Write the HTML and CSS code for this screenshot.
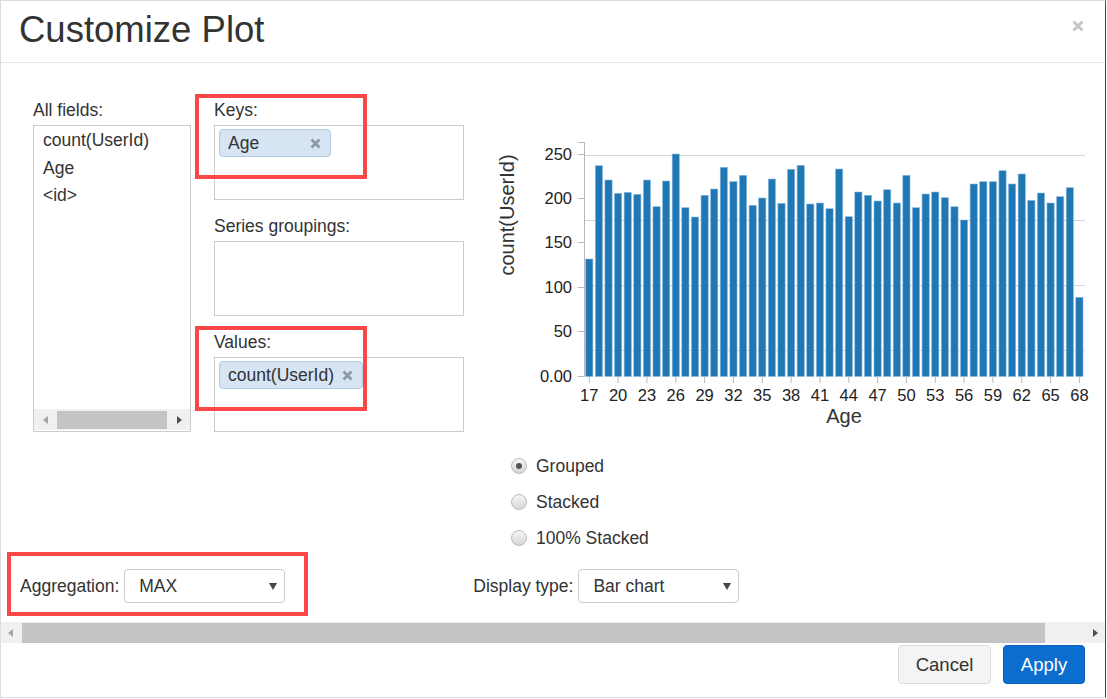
FILE: index.html
```html
<!DOCTYPE html>
<html>
<head>
<meta charset="utf-8">
<title>Customize Plot</title>
<link rel="stylesheet" href="styles.css">
</head>
<body>
<div class="modal">
  <div class="header">
    <h1 class="title">Customize Plot</h1>
    <svg class="close" width="12" height="12" viewBox="0 0 12 12"><path d="M1.5 1.5L10.5 10.5M10.5 1.5L1.5 10.5" stroke="#c6c6c6" stroke-width="3"/></svg>
  </div>

  <div class="body">
    <div class="top-row">
      <div class="fields-col">
        <div class="label">All fields:</div>
        <div class="listbox">
          <div class="list-items">
            <div class="list-item">count(UserId)</div>
            <div class="list-item">Age</div>
            <div class="list-item">&lt;id&gt;</div>
          </div>
          <div class="mini-scroll">
            <span class="arrow-left light"></span>
            <span class="mini-thumb"></span>
            <span class="arrow-right"></span>
          </div>
        </div>
      </div>

      <div class="drop-col">
        <div class="label">Keys:</div>
        <div class="dropbox">
          <span class="chip"><span>Age</span><svg class="chip-x" width="11" height="11" viewBox="0 0 11 11"><path d="M1.5 1.5L9.5 9.5M9.5 1.5L1.5 9.5" stroke="#8d99a6" stroke-width="2.8"/></svg></span>
        </div>
        <div class="label">Series groupings:</div>
        <div class="dropbox"></div>
        <div class="label">Values:</div>
        <div class="dropbox last">
          <span class="chip"><span>count(UserId)</span><svg class="chip-x" width="11" height="11" viewBox="0 0 11 11"><path d="M1.5 1.5L9.5 9.5M9.5 1.5L1.5 9.5" stroke="#8d99a6" stroke-width="2.8"/></svg></span>
        </div>
      </div>

      <div class="chart-col">
        <svg class="chart" width="610" height="300" viewBox="0 0 610 300">
          <g stroke="#d6d6d6" stroke-width="1">
            <line x1="95" y1="25.5" x2="595" y2="25.5"/>
            <line x1="95" y1="90.5" x2="595" y2="90.5"/>
            <line x1="95" y1="155.5" x2="595" y2="155.5"/>
            <line x1="95" y1="220.5" x2="595" y2="220.5"/>
          </g>
          <g fill="#1f77b4" stroke="#8dbbe0" stroke-width="0.6">
            <rect x="95.70" y="129" width="7.2" height="117.5"/>
            <rect x="105.31" y="35.7" width="7.2" height="210.8"/>
            <rect x="114.92" y="50" width="7.2" height="196.5"/>
            <rect x="124.53" y="63.3" width="7.2" height="183.2"/>
            <rect x="134.14" y="62.3" width="7.2" height="184.2"/>
            <rect x="143.75" y="64.3" width="7.2" height="182.2"/>
            <rect x="153.36" y="50" width="7.2" height="196.5"/>
            <rect x="162.97" y="76.7" width="7.2" height="169.8"/>
            <rect x="172.58" y="51" width="7.2" height="195.5"/>
            <rect x="182.19" y="24" width="7.2" height="222.5"/>
            <rect x="191.80" y="77.7" width="7.2" height="168.8"/>
            <rect x="201.41" y="87" width="7.2" height="159.5"/>
            <rect x="211.02" y="65.3" width="7.2" height="181.2"/>
            <rect x="220.63" y="59" width="7.2" height="187.5"/>
            <rect x="230.24" y="37.3" width="7.2" height="209.2"/>
            <rect x="239.85" y="51.7" width="7.2" height="194.8"/>
            <rect x="249.46" y="45.3" width="7.2" height="201.2"/>
            <rect x="259.07" y="75.3" width="7.2" height="171.2"/>
            <rect x="268.68" y="68" width="7.2" height="178.5"/>
            <rect x="278.29" y="49" width="7.2" height="197.5"/>
            <rect x="287.90" y="73.3" width="7.2" height="173.2"/>
            <rect x="297.51" y="39.3" width="7.2" height="207.2"/>
            <rect x="307.12" y="35.3" width="7.2" height="211.2"/>
            <rect x="316.73" y="74" width="7.2" height="172.5"/>
            <rect x="326.34" y="73" width="7.2" height="173.5"/>
            <rect x="335.95" y="78.7" width="7.2" height="167.8"/>
            <rect x="345.56" y="39" width="7.2" height="207.5"/>
            <rect x="355.17" y="86.7" width="7.2" height="159.8"/>
            <rect x="364.78" y="62" width="7.2" height="184.5"/>
            <rect x="374.39" y="65.3" width="7.2" height="181.2"/>
            <rect x="384.00" y="71" width="7.2" height="175.5"/>
            <rect x="393.61" y="59.7" width="7.2" height="186.8"/>
            <rect x="403.22" y="73" width="7.2" height="173.5"/>
            <rect x="412.83" y="45.3" width="7.2" height="201.2"/>
            <rect x="422.44" y="77.7" width="7.2" height="168.8"/>
            <rect x="432.05" y="64" width="7.2" height="182.5"/>
            <rect x="441.66" y="62" width="7.2" height="184.5"/>
            <rect x="451.27" y="67.7" width="7.2" height="178.8"/>
            <rect x="460.88" y="76.7" width="7.2" height="169.8"/>
            <rect x="470.49" y="90" width="7.2" height="156.5"/>
            <rect x="480.10" y="54" width="7.2" height="192.5"/>
            <rect x="489.71" y="51.7" width="7.2" height="194.8"/>
            <rect x="499.32" y="51.7" width="7.2" height="194.8"/>
            <rect x="508.93" y="40.7" width="7.2" height="205.8"/>
            <rect x="518.54" y="54" width="7.2" height="192.5"/>
            <rect x="528.15" y="44" width="7.2" height="202.5"/>
            <rect x="537.76" y="70.3" width="7.2" height="176.2"/>
            <rect x="547.37" y="63" width="7.2" height="183.5"/>
            <rect x="556.98" y="73" width="7.2" height="173.5"/>
            <rect x="566.59" y="66.7" width="7.2" height="179.8"/>
            <rect x="576.20" y="57.7" width="7.2" height="188.8"/>
            <rect x="585.81" y="167.3" width="7.2" height="79.2"/>
          </g>
          <g stroke="#b8b8b8" stroke-width="1" fill="none">
            <path d="M88 12.5H94.5V246.5H88"/>
            <line x1="88" y1="24.5" x2="94.5" y2="24.5"/>
            <line x1="88" y1="68.5" x2="94.5" y2="68.5"/>
            <line x1="88" y1="112.5" x2="94.5" y2="112.5"/>
            <line x1="88" y1="157.5" x2="94.5" y2="157.5"/>
            <line x1="88" y1="201.5" x2="94.5" y2="201.5"/>
            <line x1="99.3" y1="246.5" x2="99.3" y2="253"/>
            <line x1="128.1" y1="246.5" x2="128.1" y2="253"/>
            <line x1="157" y1="246.5" x2="157" y2="253"/>
            <line x1="185.8" y1="246.5" x2="185.8" y2="253"/>
            <line x1="214.6" y1="246.5" x2="214.6" y2="253"/>
            <line x1="243.5" y1="246.5" x2="243.5" y2="253"/>
            <line x1="272.3" y1="246.5" x2="272.3" y2="253"/>
            <line x1="301.1" y1="246.5" x2="301.1" y2="253"/>
            <line x1="329.9" y1="246.5" x2="329.9" y2="253"/>
            <line x1="358.8" y1="246.5" x2="358.8" y2="253"/>
            <line x1="387.6" y1="246.5" x2="387.6" y2="253"/>
            <line x1="416.4" y1="246.5" x2="416.4" y2="253"/>
            <line x1="445.3" y1="246.5" x2="445.3" y2="253"/>
            <line x1="474.1" y1="246.5" x2="474.1" y2="253"/>
            <line x1="502.9" y1="246.5" x2="502.9" y2="253"/>
            <line x1="531.8" y1="246.5" x2="531.8" y2="253"/>
            <line x1="560.6" y1="246.5" x2="560.6" y2="253"/>
            <line x1="589.4" y1="246.5" x2="589.4" y2="253"/>
          </g>
          <g class="tick-text" text-anchor="end">
            <text x="82" y="29.5">250</text>
            <text x="82" y="73.5">200</text>
            <text x="82" y="117.5">150</text>
            <text x="82" y="162.5">100</text>
            <text x="82" y="206.5">50</text>
            <text x="82" y="251.5">0.00</text>
          </g>
          <g class="tick-text" text-anchor="middle">
            <text x="99.3" y="271">17</text>
            <text x="128.1" y="271">20</text>
            <text x="157" y="271">23</text>
            <text x="185.8" y="271">26</text>
            <text x="214.6" y="271">29</text>
            <text x="243.5" y="271">32</text>
            <text x="272.3" y="271">35</text>
            <text x="301.1" y="271">38</text>
            <text x="329.9" y="271">41</text>
            <text x="358.8" y="271">44</text>
            <text x="387.6" y="271">47</text>
            <text x="416.4" y="271">50</text>
            <text x="445.3" y="271">53</text>
            <text x="474.1" y="271">56</text>
            <text x="502.9" y="271">59</text>
            <text x="531.8" y="271">62</text>
            <text x="560.6" y="271">65</text>
            <text x="589.4" y="271">68</text>
          </g>
          <text class="axis-title" x="354" y="293" text-anchor="middle">Age</text>
          <text class="axis-title" transform="translate(24 85) rotate(-90)" text-anchor="middle">count(UserId)</text>
        </svg>

        <div class="radios">
          <div class="radio"><span class="radio-circle checked"></span><span class="radio-label">Grouped</span></div>
          <div class="radio"><span class="radio-circle"></span><span class="radio-label">Stacked</span></div>
          <div class="radio"><span class="radio-circle"></span><span class="radio-label">100% Stacked</span></div>
        </div>
      </div>
    </div>

    <div class="bottom-row">
      <div class="field-group">
        <span class="field-label">Aggregation:</span>
        <div class="select"><span>MAX</span><svg width="8" height="7" viewBox="0 0 8 7"><path d="M0 0H8L4 7Z" fill="#444"/></svg></div>
      </div>
      <div class="field-group display-group">
        <span class="field-label">Display type:</span>
        <div class="select"><span>Bar chart</span><svg width="8" height="7" viewBox="0 0 8 7"><path d="M0 0H8L4 7Z" fill="#444"/></svg></div>
      </div>
    </div>
  </div>

  <div class="hscroll">
    <span class="arrow-left light"></span>
    <span class="hthumb"></span>
    <span class="arrow-right"></span>
  </div>

  <div class="footer">
    <button class="btn btn-cancel">Cancel</button>
    <button class="btn btn-apply">Apply</button>
  </div>

  <div class="callout callout-keys"></div>
  <div class="callout callout-values"></div>
  <div class="callout callout-agg"></div>
</div>
</body>
</html>
```

FILE: styles.css
```css
html, body {
  margin: 0;
  padding: 0;
  background: #fff;
}

body {
  font-family: "Liberation Sans", Arial, sans-serif;
  color: #333;
}

.modal {
  position: relative;
  width: 1106px;
  height: 698px;
  box-sizing: border-box;
  border: 1px solid #dcdcdc;
  border-right: 1px solid #4a4a4a;
  display: flex;
  flex-direction: column;
  background: #fff;
}

/* Header */
.header {
  flex-shrink: 0;
  height: 61px;
  border-bottom: 1px solid #e5e5e5;
  display: flex;
  justify-content: space-between;
  align-items: flex-start;
  padding: 0 21px 0 18px;
}

.title {
  margin: 9px 0 0;
  font-size: 36.5px;
  line-height: 40px;
  font-weight: normal;
  color: #333;
}

.close {
  margin-top: 19px;
}

/* Body */
.body {
  flex-shrink: 0;
  height: 559px;
  display: flex;
  flex-direction: column;
}

.top-row {
  display: flex;
  align-items: flex-start;
  padding: 37px 0 0 32px;
}

.label {
  font-size: 17.5px;
  line-height: 20px;
  height: 20px;
  margin-bottom: 5px;
  color: #333;
}

.fields-col {
  width: 158px;
}

.listbox {
  height: 307px;
  box-sizing: border-box;
  border: 1px solid #cccccc;
  display: flex;
  flex-direction: column;
}

.list-items {
  flex: 1;
  padding: 1px 0 0 9px;
}

.list-item {
  font-size: 17.5px;
  line-height: 27.5px;
}

.mini-scroll {
  height: 21px;
  margin-bottom: 1px;
  background: #f0f0f0;
  display: flex;
  align-items: center;
}

.mini-scroll .arrow-left {
  margin-left: 9px;
}

.mini-thumb {
  margin-left: 9px;
  width: 110px;
  height: 18px;
  background: #c4c4c4;
}

.mini-scroll .arrow-right {
  margin-left: 10px;
}

.arrow-left {
  width: 0;
  height: 0;
  border-top: 4px solid transparent;
  border-bottom: 4px solid transparent;
  border-right: 5px solid #505050;
}

.arrow-left.light {
  border-right-color: #a3a3a3;
}

.arrow-right {
  width: 0;
  height: 0;
  border-top: 4px solid transparent;
  border-bottom: 4px solid transparent;
  border-left: 5px solid #505050;
}

/* Drop zones */
.drop-col {
  width: 250px;
  margin-left: 23px;
}

.dropbox {
  height: 75px;
  box-sizing: border-box;
  border: 1px solid #cccccc;
  padding: 3px 4px;
  margin-bottom: 16px;
}

.dropbox.last {
  margin-bottom: 0;
}

.chip {
  display: inline-flex;
  align-items: center;
  justify-content: space-between;
  gap: 8px;
  min-width: 112px;
  height: 28px;
  box-sizing: border-box;
  padding: 0 9px 0 8px;
  background: #d6e4f3;
  border: 1px solid #b3cbe4;
  border-radius: 4px;
  font-size: 17.5px;
  line-height: 26px;
  color: #333;
}

.chip-x {
  display: block;
}

/* Chart */
.chart-col {
  margin-left: 26px;
}

.chart {
  display: block;
  margin-top: 30px;
}

.tick-text {
  font-family: "Liberation Sans", Arial, sans-serif;
  font-size: 16.5px;
  fill: #222;
}

.axis-title {
  font-family: "Liberation Sans", Arial, sans-serif;
  font-size: 20px;
  fill: #333;
}

.radios {
  margin-top: 26px;
  padding-left: 21px;
}

.radio {
  display: flex;
  align-items: center;
  height: 20px;
  margin-bottom: 16px;
}

.radio-circle {
  position: relative;
  width: 16px;
  height: 16px;
  box-sizing: border-box;
  border-radius: 50%;
  border: 1px solid #bababa;
  background: linear-gradient(#f6f6f6, #d6d6d6);
  margin-right: 9px;
}

.radio-circle.checked::after {
  content: "";
  position: absolute;
  left: 4px;
  top: 4px;
  width: 6px;
  height: 6px;
  border-radius: 50%;
  background: #555;
}

.radio-label {
  font-size: 17.5px;
  line-height: 20px;
}

/* Bottom row */
.bottom-row {
  margin-top: auto;
  padding: 0 0 19px 19px;
  display: flex;
  align-items: center;
}

.field-group {
  display: flex;
  align-items: center;
  gap: 5px;
}

.display-group {
  margin-left: 188px;
}

.field-label {
  font-size: 17.5px;
}

.select {
  width: 161px;
  height: 34px;
  box-sizing: border-box;
  border: 1px solid #cccccc;
  border-radius: 4px;
  display: flex;
  align-items: center;
  justify-content: space-between;
  padding: 0 7px 0 14px;
  font-size: 17.5px;
  color: #333;
}

/* Horizontal scrollbar */
.hscroll {
  flex-shrink: 0;
  height: 21px;
  background: #f0f0f0;
  display: flex;
  align-items: center;
}

.hscroll .arrow-left {
  margin-left: 7px;
}

.hthumb {
  margin-left: 9px;
  width: 1023px;
  height: 20px;
  background: #c4c4c4;
}

.hscroll .arrow-right {
  margin-left: 48px;
}

/* Footer */
.footer {
  flex: 1;
  display: flex;
  justify-content: flex-end;
  align-items: flex-start;
  gap: 12px;
  padding: 2px 20px 0 0;
}

.btn {
  height: 39px;
  box-sizing: border-box;
  border-radius: 4px;
  font-family: "Liberation Sans", Arial, sans-serif;
  font-size: 18.5px;
  padding: 0;
}

.btn-cancel {
  width: 93px;
  background: #f4f4f4;
  border: 1px solid #dcdcdc;
  color: #333;
}

.btn-apply {
  width: 82px;
  background: #0b6dce;
  border: 1px solid #0a5fb8;
  color: #fff;
}

/* Red annotation frames */
.callout {
  position: absolute;
  box-sizing: border-box;
  border: 4px solid #f94848;
}

.callout-keys {
  left: 194px;
  top: 93px;
  width: 172px;
  height: 85px;
}

.callout-values {
  left: 194px;
  top: 325px;
  width: 172px;
  height: 85px;
}

.callout-agg {
  left: 6px;
  top: 551px;
  width: 301px;
  height: 64px;
}
```
